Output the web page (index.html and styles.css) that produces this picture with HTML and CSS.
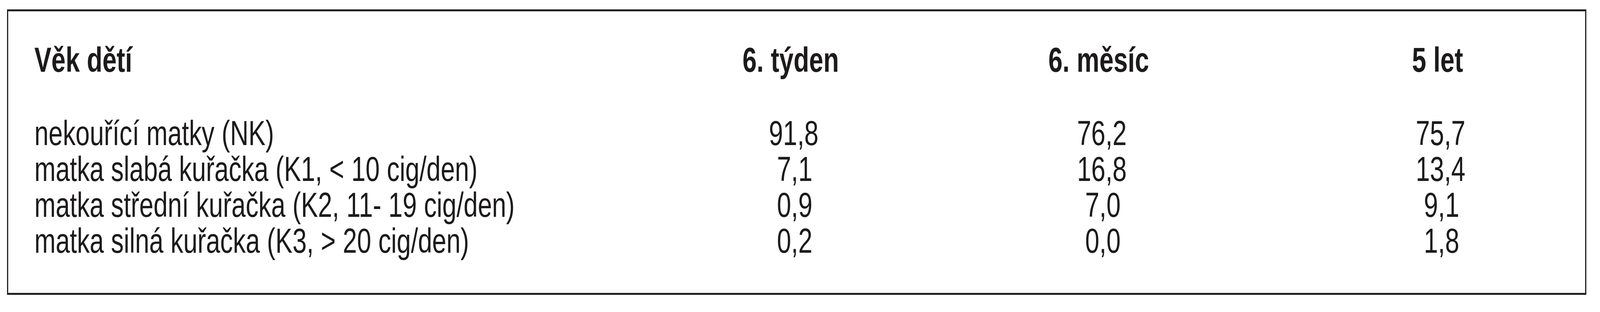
FILE: index.html
```html
<!DOCTYPE html>
<html lang="cs">
<head>
<meta charset="utf-8">
<title>Věk dětí</title>
<link rel="stylesheet" href="styles.css">
</head>
<body>
<div class="page">
  <div class="frame">
    <div class="table">
      <div class="cell head label"><span class="t">Věk dětí</span></div>
      <div class="cell head num"><span class="t">6. týden</span></div>
      <div class="cell head num"><span class="t">6. měsíc</span></div>
      <div class="cell head num"><span class="t">5 let</span></div>

      <div class="cell label"><span class="t">nekouřící matky (NK)</span></div>
      <div class="cell num"><span class="val">91,8</span></div>
      <div class="cell num"><span class="val">76,2</span></div>
      <div class="cell num"><span class="val">75,7</span></div>

      <div class="cell label"><span class="t">matka slabá kuřačka (K1, &lt; 10 cig/den)</span></div>
      <div class="cell num"><span class="val">7,1</span></div>
      <div class="cell num"><span class="val">16,8</span></div>
      <div class="cell num"><span class="val">13,4</span></div>

      <div class="cell label"><span class="t">matka střední kuřačka (K2, 11- 19 cig/den)</span></div>
      <div class="cell num"><span class="val">0,9</span></div>
      <div class="cell num"><span class="val">7,0</span></div>
      <div class="cell num"><span class="val">9,1</span></div>

      <div class="cell label"><span class="t">matka silná kuřačka (K3, &gt; 20 cig/den)</span></div>
      <div class="cell num"><span class="val">0,2</span></div>
      <div class="cell num"><span class="val">0,0</span></div>
      <div class="cell num"><span class="val">1,8</span></div>
    </div>
  </div>
</div>
</body>
</html>
```

FILE: styles.css
```css
/* horizontal unit: 1rem = 100 px of the 5581 px wide design */
html {
  font-size: calc(100vw / 55.81);
  --sx: 1;
}

@media (max-width: 5000px) {
  html {
    --sx: 0.73392;
  }
}

html, body {
  margin: 0;
  padding: 0;
  background: #ffffff;
  overflow: hidden;
}

body {
  font-family: "Liberation Sans", Arial, Helvetica, sans-serif;
  color: #1c1a1b;
}

.page {
  padding: 24px 0 0 0.24rem;
}

.frame {
  box-sizing: border-box;
  width: 55.09rem;
  border-style: solid;
  border-color: #231f20;
  border-width: 5px 0.05rem;
  padding: 77.5px 2.57rem 88.5px 0.92rem;
}

.table {
  display: grid;
  grid-template-columns: 24.88rem 3rem 18.5rem 5.12rem;
  font-size: 89px;
  line-height: 92px;
}

.cell {
  white-space: nowrap;
}

.head {
  font-weight: bold;
  margin-bottom: 96px;
}

.label {
  text-align: left;
}

.num {
  display: flex;
  justify-content: center;
}

.t {
  display: inline-block;
  transform: scaleX(var(--sx));
}

.label .t {
  transform-origin: left center;
}

.num .t {
  transform-origin: center center;
}

.val {
  display: inline-block;
  flex: none;
  width: 152px;
  text-align: right;
  transform: scaleX(var(--sx));
  transform-origin: center center;
}
```
